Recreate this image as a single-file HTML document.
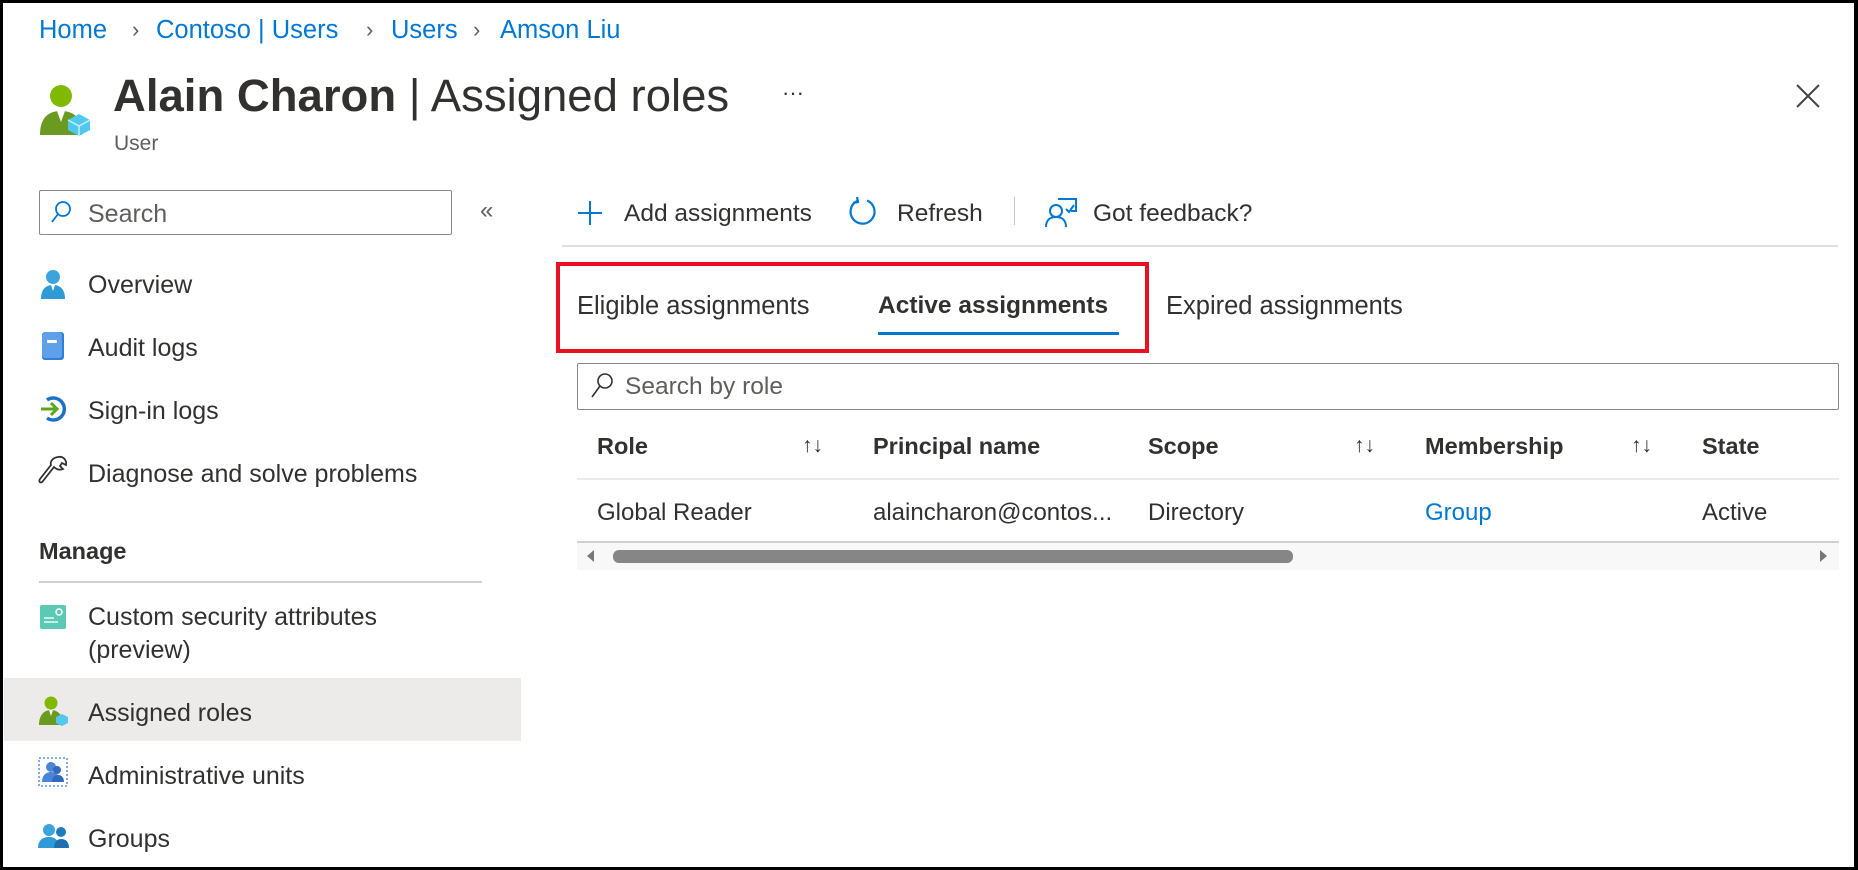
<!DOCTYPE html>
<html><head><meta charset="utf-8"><style>
*{margin:0;padding:0;box-sizing:border-box}
body{width:1858px;height:870px;overflow:hidden;background:#fff;font-family:"Liberation Sans",Arial,sans-serif;color:#323130;position:relative}
.frame{position:absolute;left:0;top:0;width:1858px;height:870px;border:3px solid #000;border-right-width:4px}
.a{position:absolute;white-space:nowrap;line-height:30px}
.bc{font-size:25.5px;color:#0078d4}
.chev{color:#605e5c;font-size:22px}
.nav{font-size:25px;color:#323130}
.tb{font-size:24.5px}
.tab{font-size:25.5px}
.th{font-size:23.5px;font-weight:bold;color:#323130}
.td{font-size:24px}
.line{position:absolute;height:2px;background:#e1dfdd}
</style></head><body>
<div class="frame"></div>

<div class="a bc" style="left:39px;top:15px">Home</div>
<div class="a chev" style="left:132px;top:15px">&#x203A;</div>
<div class="a bc" style="left:156px;top:15px">Contoso | Users</div>
<div class="a chev" style="left:366px;top:15px">&#x203A;</div>
<div class="a bc" style="left:391px;top:15px">Users</div>
<div class="a chev" style="left:473px;top:15px">&#x203A;</div>
<div class="a bc" style="left:500px;top:15px">Amson Liu</div>

<svg class="a" style="left:38px;top:82px" width="56" height="56" viewBox="0 0 56 56">
<circle cx="23" cy="14" r="11" fill="#7fba00"/>
<path d="M2 53 C2 36 10 29 23 29 C36 29 44 36 44 53 Z" fill="#6a9a1f"/>
<path d="M19 29 L23 40 L27 29 Z" fill="#fff"/>
<path d="M30 38 L41 32 L52 38 L52 48 L41 54 L30 48 Z" fill="#50c8f0"/>
<path d="M30 38 L41 44 L52 38 M41 44 L41 54" stroke="#c5eefc" stroke-width="1.5" fill="none"/>
</svg>
<div class="a" style="left:113px;top:71px;font-size:45.5px;line-height:50px"><b style="font-weight:bold">Alain Charon</b> | Assigned roles</div>
<div class="a" style="left:114px;top:129px;font-size:21px;color:#605e5c">User</div>
<div class="a" style="left:782px;top:78px;font-size:22px;color:#323130">&middot;&middot;&middot;</div>
<svg class="a" style="left:1796px;top:84px" width="24" height="24" viewBox="0 0 24 24"><path d="M1 1 L23 23 M23 1 L1 23" stroke="#444" stroke-width="2"/></svg>

<div style="position:absolute;left:39px;top:190px;width:413px;height:45px;border:1.5px solid #8a8886;border-radius:2px"></div>
<svg class="a" style="left:50px;top:200px" width="22" height="24" viewBox="0 0 22 24"><circle cx="13" cy="9" r="7" stroke="#0078d4" stroke-width="1.8" fill="none"/><path d="M8 14 L2 22" stroke="#0078d4" stroke-width="1.8"/></svg>
<div class="a nav" style="left:88px;top:199px;color:#605e5c">Search</div>
<div class="a" style="left:480px;top:196px;font-size:24px;color:#605e5c">&laquo;</div>

<svg class="a" style="left:39px;top:269px" width="28" height="30" viewBox="0 0 28 30"><circle cx="14" cy="8" r="7" fill="#3ca4dc"/><path d="M2 30 C2 20 7 16 14 16 C21 16 26 20 26 30Z" fill="#2e9bd6"/><path d="M12 16 L14 22 L16 16Z" fill="#fff"/></svg>
<div class="a nav" style="left:88px;top:270px">Overview</div>
<svg class="a" style="left:39px;top:331px" width="28" height="30" viewBox="0 0 28 30"><rect x="3" y="1" width="22" height="28" rx="3" fill="#2f7fd4"/><rect x="3" y="1" width="20" height="26" rx="3" fill="#5ea0ea"/><rect x="8" y="9" width="10" height="3" fill="#fff"/></svg>
<div class="a nav" style="left:88px;top:333px">Audit logs</div>
<svg class="a" style="left:39px;top:394px" width="28" height="30" viewBox="0 0 28 30"><path d="M8 6 A11 11 0 1 1 8 24" stroke="#1a73c9" stroke-width="3.5" fill="none"/><path d="M2 15 L18 15 M12 9 L18 15 L12 21" stroke="#5ba61a" stroke-width="3" fill="none"/></svg>
<div class="a nav" style="left:88px;top:396px">Sign-in logs</div>
<svg class="a" style="left:38px;top:455px" width="30" height="32" viewBox="0 0 30 32"><path d="M20 2 C25 1 29 5 28 10 L24 8 L22 11 L25 14 C20 16 17 13 16 12 L5 26 C3 29 0 27 2 24 L13 10 C12 7 14 3 20 2Z" stroke="#323130" stroke-width="1.8" fill="none"/></svg>
<div class="a nav" style="left:88px;top:459px">Diagnose and solve problems</div>
<div class="a nav" style="left:39px;top:536px;font-weight:bold;font-size:23.5px">Manage</div>
<div class="line" style="left:39px;top:581px;width:443px;background:#d2d0ce"></div>
<svg class="a" style="left:39px;top:604px" width="28" height="26" viewBox="0 0 28 26"><rect x="1" y="1" width="26" height="24" rx="2" fill="#5cc9b5"/><circle cx="20" cy="8" r="3" stroke="#fff" stroke-width="1.5" fill="none"/><rect x="5" y="13" width="10" height="2" fill="#c8efe7"/><rect x="5" y="17" width="14" height="2" fill="#c8efe7"/></svg>
<div class="a nav" style="left:88px;top:602px">Custom security attributes</div>
<div class="a nav" style="left:88px;top:635px">(preview)</div>
<div style="position:absolute;left:4px;top:678px;width:517px;height:63px;background:#edebe9"></div>
<svg class="a" style="left:38px;top:695px" width="32" height="32" viewBox="0 0 32 32"><circle cx="13" cy="8" r="6.5" fill="#7fba00"/><path d="M1 30 C1 20 6 15 13 15 C20 15 25 20 25 30Z" fill="#6a9a1f"/><path d="M11 15 L13 21 L15 15Z" fill="#fff"/><path d="M18 22 L24 19 L30 22 L30 28 L24 31 L18 28Z" fill="#50c8f0"/></svg>
<div class="a nav" style="left:88px;top:698px">Assigned roles</div>
<svg class="a" style="left:38px;top:757px" width="30" height="30" viewBox="0 0 30 30"><rect x="1" y="1" width="28" height="28" fill="none" stroke="#5b8fe0" stroke-width="1.5" stroke-dasharray="2 2"/><circle cx="13" cy="10" r="5" fill="#4a86d8"/><path d="M4 25 C4 18 8 15 13 15 C18 15 22 18 22 25Z" fill="#4a86d8"/><circle cx="19" cy="13" r="4" fill="#2f6ac0"/><path d="M14 25 C14 20 17 18 20 18 C24 18 26 21 26 25Z" fill="#2f6ac0"/></svg>
<div class="a nav" style="left:88px;top:761px">Administrative units</div>
<svg class="a" style="left:38px;top:822px" width="32" height="28" viewBox="0 0 32 28"><circle cx="11" cy="8" r="6" fill="#3ca4dc"/><path d="M0 26 C0 18 5 15 11 15 C17 15 21 18 21 26Z" fill="#2e9bd6"/><circle cx="23" cy="10" r="5" fill="#1f7bc0"/><path d="M16 26 C16 20 19 17 23 17 C28 17 31 20 31 26Z" fill="#1f6fb0"/></svg>
<div class="a nav" style="left:88px;top:824px">Groups</div>

<svg class="a" style="left:577px;top:200px" width="26" height="26" viewBox="0 0 26 26"><path d="M13 1 L13 25 M1 13 L25 13" stroke="#0078d4" stroke-width="2"/></svg>
<div class="a tb" style="left:624px;top:199px">Add assignments</div>
<svg class="a" style="left:847px;top:196px" width="32" height="32" viewBox="0 0 32 32"><path d="M10 5 A12 12 0 1 0 20 4.5" stroke="#0078d4" stroke-width="2.2" fill="none"/><path d="M10 1 L11 6 L6 7" stroke="#0078d4" stroke-width="2.2" fill="none"/></svg>
<div class="a tb" style="left:897px;top:199px">Refresh</div>
<div style="position:absolute;left:1014px;top:197px;width:1px;height:28px;background:#c8c6c4"></div>
<svg class="a" style="left:1044px;top:195px" width="34" height="34" viewBox="0 0 34 34"><path d="M14 4 L32 4 L32 16 L27 16" stroke="#0078d4" stroke-width="2" fill="none"/><circle cx="12" cy="16" r="6" stroke="#0078d4" stroke-width="2" fill="none"/><path d="M2 32 C2 25 6 22 12 22 C18 22 22 25 22 32" stroke="#0078d4" stroke-width="2" fill="none"/><path d="M22 14 L25 17 L30 10" stroke="#0078d4" stroke-width="2" fill="none"/></svg>
<div class="a tb" style="left:1093px;top:199px">Got feedback?</div>
<div class="line" style="left:562px;top:245px;width:1276px"></div>

<div style="position:absolute;left:556px;top:262px;width:593px;height:91px;border:4px solid #e81123"></div>
<div class="a tab" style="left:577px;top:291px">Eligible assignments</div>
<div class="a tab" style="left:878px;top:291px;font-weight:bold;font-size:24.5px">Active assignments</div>
<div style="position:absolute;left:878px;top:332px;width:241px;height:3px;background:#0078d4"></div>
<div class="a tab" style="left:1166px;top:291px">Expired assignments</div>

<div style="position:absolute;left:577px;top:363px;width:1262px;height:47px;border:1.5px solid #8a8886;border-radius:2px"></div>
<svg class="a" style="left:590px;top:372px" width="24" height="28" viewBox="0 0 24 28"><circle cx="15" cy="9" r="7" stroke="#323130" stroke-width="1.6" fill="none"/><path d="M10 14 L2 25" stroke="#323130" stroke-width="1.6"/></svg>
<div class="a tb" style="left:625px;top:372px;color:#605e5c">Search by role</div>

<div class="a th" style="left:597px;top:431px">Role</div>
<div class="a" style="left:802px;top:431px;font-size:21px;color:#323130">&#x2191;&#x2193;</div>
<div class="a th" style="left:873px;top:431px">Principal name</div>
<div class="a th" style="left:1148px;top:431px">Scope</div>
<div class="a" style="left:1354px;top:431px;font-size:21px;color:#323130">&#x2191;&#x2193;</div>
<div class="a th" style="left:1425px;top:431px">Membership</div>
<div class="a" style="left:1631px;top:431px;font-size:21px;color:#323130">&#x2191;&#x2193;</div>
<div class="a th" style="left:1702px;top:431px">State</div>
<div class="line" style="left:577px;top:478px;width:1262px;background:#edebe9"></div>
<div class="a td" style="left:597px;top:498px">Global Reader</div>
<div class="a td" style="left:873px;top:498px">alaincharon@contos...</div>
<div class="a td" style="left:1148px;top:498px">Directory</div>
<div class="a td" style="left:1425px;top:498px;color:#0078d4">Group</div>
<div class="a td" style="left:1702px;top:498px">Active</div>
<div class="line" style="left:577px;top:541px;width:1262px;background:#d2d0ce"></div>
<div style="position:absolute;left:577px;top:543px;width:1262px;height:27px;background:#f8f8f8"></div>
<div style="position:absolute;left:587px;top:550px;width:0;height:0;border-top:6px solid transparent;border-bottom:6px solid transparent;border-right:7px solid #777"></div>
<div style="position:absolute;left:613px;top:550px;width:680px;height:13px;border-radius:6px;background:#868686"></div>
<div style="position:absolute;left:1820px;top:550px;width:0;height:0;border-top:6px solid transparent;border-bottom:6px solid transparent;border-left:7px solid #777"></div>
</body></html>
